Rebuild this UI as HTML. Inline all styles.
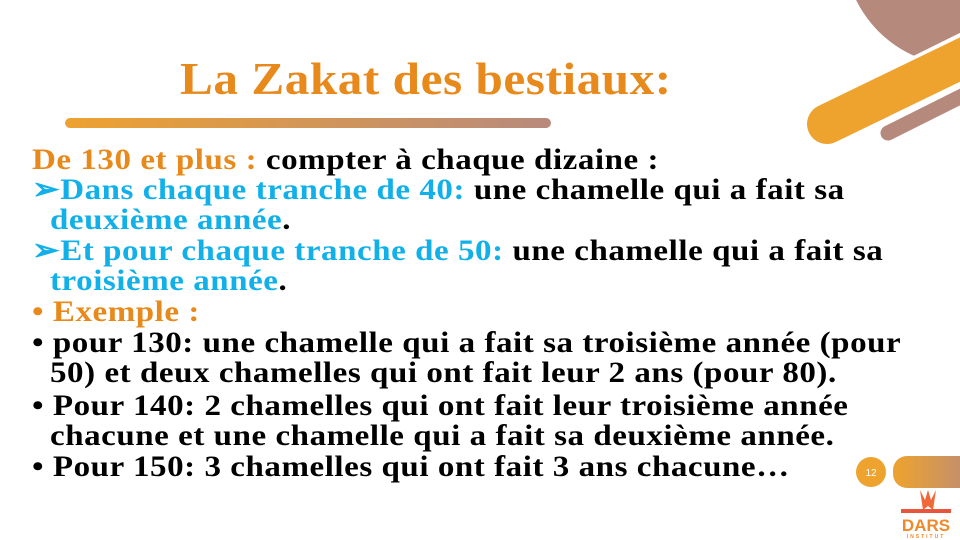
<!DOCTYPE html>
<html><head><meta charset="utf-8"><style>
html,body{margin:0;padding:0}
body{width:960px;height:540px;position:relative;overflow:hidden;background:#fff;font-family:"Liberation Serif",serif;font-weight:bold}
.t{position:absolute;left:180px;top:52px;font-size:46px;color:#e8891c;letter-spacing:0.5px;white-space:nowrap;transform:scaleX(1.07);transform-origin:left}
.bar{position:absolute;left:65px;top:118px;width:486px;height:10px;border-radius:5px;background:linear-gradient(90deg,#eda230,#b88a7d)}
.l{position:absolute;left:32px;font-size:30px;letter-spacing:0.5px;white-space:nowrap;color:#000;line-height:30px;transform:scaleX(1.1);transform-origin:left}
.o{color:#e8891c}.b{color:#12b0e8}
.ind{left:50px}
</style></head><body>
<svg width="960" height="540" style="position:absolute;left:0;top:0">
<circle cx="962" cy="-52" r="118" fill="#b5897c"/>
<line x1="830" y1="125" x2="990" y2="46" stroke="#fff" stroke-width="50" stroke-linecap="round"/>
<line x1="827" y1="124" x2="990" y2="45" stroke="#eea32e" stroke-width="40" stroke-linecap="round"/>
<line x1="888" y1="133" x2="990" y2="82" stroke="#b5897c" stroke-width="15" stroke-linecap="round"/>
<circle cx="871" cy="472" r="15" fill="#eea32e"/>
<text x="871" y="476" font-family="Liberation Sans" font-size="10" fill="#fff" text-anchor="middle" font-weight="normal">12</text>
<defs><linearGradient id="g" x1="0" x2="1"><stop offset="0" stop-color="#eea32e"/><stop offset="1" stop-color="#b88a7d"/></linearGradient></defs>
<rect x="893" y="456" width="90" height="32" rx="14" fill="url(#g)"/>
<path d="M920 490 L925 500 L928 490 L931 500 L936 490 L933 510 L928 506 L923 510 Z" fill="#f0673a"/>
<rect x="901" y="509" width="50" height="4" fill="#e8553a"/>
<text x="926" y="531" font-family="Liberation Sans" font-size="17" font-weight="bold" fill="#ee8a2c" text-anchor="middle">DARS</text>
<text x="926" y="538" font-family="Liberation Sans" font-size="5" fill="#ee8a2c" text-anchor="middle" letter-spacing="2">INSTITUT</text>
</svg>
<div class="t">La Zakat des bestiaux:</div>
<div class="bar"></div>
<div class="l" style="top:145px"><span class="o">De 130 et plus :</span> compter à chaque dizaine :</div>
<div class="l" style="top:175px"><span class="b">➢Dans chaque tranche de 40:</span> une chamelle qui a fait sa</div>
<div class="l ind" style="top:205px"><span class="b">deuxième année</span>.</div>
<div class="l" style="top:236px"><span class="b">➢Et pour chaque tranche de 50:</span> une chamelle qui a fait sa</div>
<div class="l ind" style="top:266px"><span class="b">troisième année</span>.</div>
<div class="l o" style="top:297px">• Exemple :</div>
<div class="l" style="top:328px">• pour 130: une chamelle qui a fait sa troisième année (pour</div>
<div class="l ind" style="top:358px">50) et deux chamelles qui ont fait leur 2 ans (pour 80).</div>
<div class="l" style="top:391px">• Pour 140: 2 chamelles qui ont fait leur troisième année</div>
<div class="l ind" style="top:421px">chacune et une chamelle qui a fait sa deuxième année.</div>
<div class="l" style="top:452px">• Pour 150: 3 chamelles qui ont fait 3 ans chacune…</div>
</body></html>
